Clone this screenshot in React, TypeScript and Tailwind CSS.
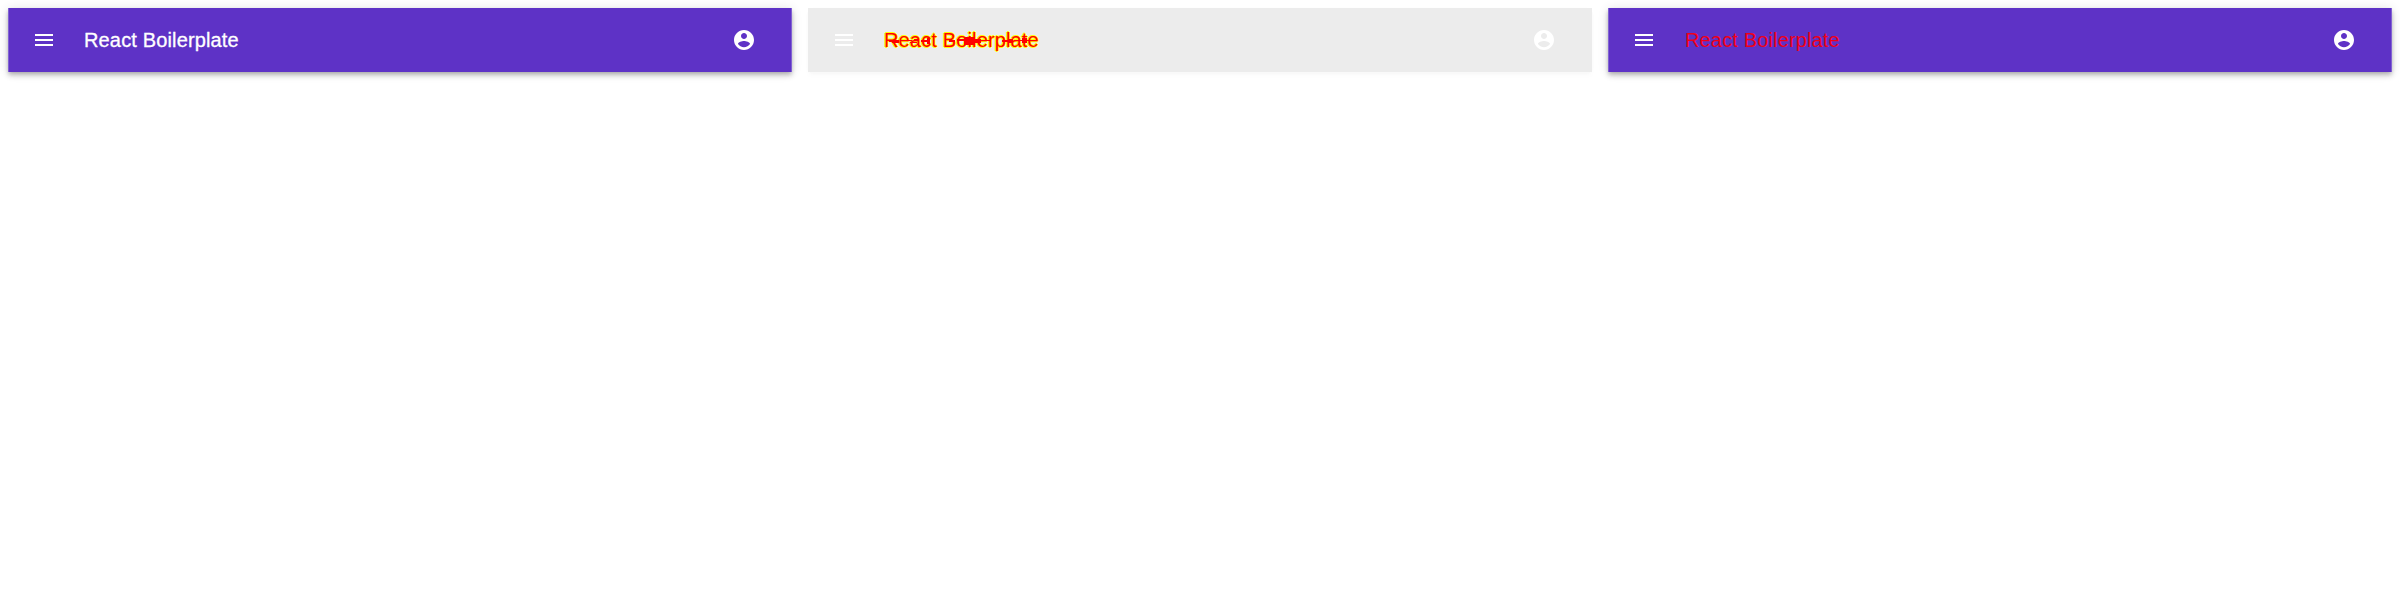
import React from "react";

type Variant = "base" | "diff" | "changed";

const bars: Record<Variant, string> = {
  base: "border-x border-[#8263d2] bg-[#5e32c6] shadow-[0_2px_4px_-1px_rgba(0,0,0,0.2),0_4px_5px_0_rgba(0,0,0,0.14),0_1px_10px_0_rgba(0,0,0,0.12)]",
  diff: "border-x border-[#ececec] bg-[#ececec] shadow-[0_2px_4px_-1px_rgba(0,0,0,0.02),0_4px_5px_0_rgba(0,0,0,0.014),0_1px_10px_0_rgba(0,0,0,0.012)]",
  changed: "border-x border-[#8263d2] bg-[#5e32c6] shadow-[0_2px_4px_-1px_rgba(0,0,0,0.2),0_4px_5px_0_rgba(0,0,0,0.14),0_1px_10px_0_rgba(0,0,0,0.12)]",
};

const titles: Record<Variant, string> = {
  base: "text-white [-webkit-text-stroke:0.3px_#ffffff]",
  diff: "text-[#ff0000] [text-shadow:1px_0_#ffff00,-1px_0_#ffff00,0_1px_#ffff00,0_-1px_#ffff00]",
  changed: "pl-px text-[#f00018]",
};

function DiffBlots() {
  return (
    <svg className="pointer-events-none absolute left-0 top-0 h-8 w-40" viewBox="0 0 160 32" fill="#ff0000" shapeRendering="crispEdges">
      <path d="M5 16h10v2H5zM8 18h7v1H8zM19 16h9v1h-9zM26 18h7v1h-7zM30 15h5v2h-5zM37 16h7v2h-7zM43 14h3v6h-3z" />
      <path d="M65 16h6v2h-6zM73 15h24v2H73zM80 13h11v8h-11zM91 17h6v2h-6zM100 16h6v1h-6z" />
      <path d="M118 16h7v2h-7zM125 15h4v4h-4zM130 16h8v1h-8zM138 14h5v5h-5zM143 16h9v1h-9z" />
    </svg>
  );
}

function AppBar({ variant }: { variant: Variant }) {
  return (
    <div className="w-[800px] p-2">
      <header className={`flex h-16 items-center px-[23px] text-white ${bars[variant]}`}>
        <button className="-ml-3 mr-4 p-3">
          <svg className="size-6" viewBox="0 0 24 24" fill="currentColor">
            <path d="M3 18h18v-2H3v2zm0-5h18v-2H3v2zm0-7v2h18V6H3z" />
          </svg>
        </button>
        <h6 className={`relative grow font-['Liberation_Sans',sans-serif] text-[20px] leading-8 tracking-[0.0075em] ${titles[variant]}`}>
          React Boilerplate
          {variant === "diff" && <DiffBlots />}
        </h6>
        <button className="p-3">
          <svg className="size-6" viewBox="0 0 24 24" fill="currentColor">
            <path d="M12 2C6.48 2 2 6.48 2 12s4.48 10 10 10 10-4.48 10-10S17.52 2 12 2zm0 3c1.66 0 3 1.34 3 3s-1.34 3-3 3-3-1.34-3-3 1.34-3 3-3zm0 14.2c-2.5 0-4.71-1.28-6-3.22.03-1.99 4-3.08 6-3.08 1.99 0 5.97 1.09 6 3.08-1.29 1.94-3.5 3.22-6 3.22z" />
          </svg>
        </button>
      </header>
    </div>
  );
}

export default function App() {
  return (
    <main className="flex h-[600px] w-[2400px] bg-white">
      <AppBar variant="base" />
      <AppBar variant="diff" />
      <AppBar variant="changed" />
    </main>
  );
}
